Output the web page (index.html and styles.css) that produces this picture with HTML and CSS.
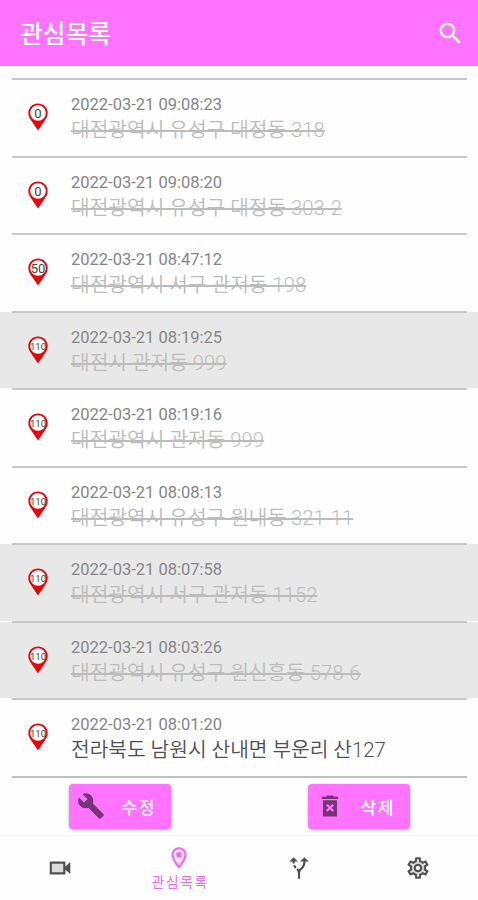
FILE: index.html
```html
<!DOCTYPE html>
<html lang="ko">
<head>
    <meta charset="UTF-8">
    <meta name="viewport" content="width=device-width, initial-scale=1.0">
    <title>관심목록</title>
    <link rel="stylesheet" href="styles.css">
</head>
<body>
    <header class="app-bar">
        <h1>관심목록</h1>
        <svg class="search" viewBox="0 0 24 24"><path d="M15.5 14h-.79l-.28-.27A6.47 6.47 0 0 0 16 9.5 6.5 6.5 0 1 0 9.5 16c1.61 0 3.09-.59 4.23-1.57l.27.28v.79l5 4.99L20.49 19l-4.99-5zm-6 0C7.01 14 5 11.99 5 9.5S7.01 5 9.5 5 14 7.01 14 9.5 11.99 14 9.5 14z"/></svg>
    </header>

    <ul class="list" id="list"></ul>

    <div class="actions">
        <div class="action">
            <button class="btn">
                <svg class="wrench" viewBox="0 0 24 24"><path d="M22.7 19l-9.1-9.1c.9-2.3.4-5-1.5-6.9-2-2-5-2.4-7.4-1.3L9 6 6 9 1.6 4.7C.4 7.1.9 10.1 2.9 12.1c1.9 1.9 4.6 2.4 6.9 1.5l9.1 9.1c.4.4 1 .4 1.4 0l2.3-2.3c.5-.4.5-1.1.1-1.4z"/></svg>
                <span>수정</span>
            </button>
        </div>
        <div class="action">
            <button class="btn">
                <svg class="trash" viewBox="0 0 24 24"><path d="M6 21h12V7H6v14zm2.6-9.4L10 10.2l2 2 2-2 1.4 1.4-2 2 2 2L14 17l-2-2-2 2-1.4-1.4 2-2-2-2zM19 4h-3.500l-1-1h-5l-1 1H5v2h14V4z"/></svg>
                <span>삭제</span>
            </button>
        </div>
    </div>

    <nav class="tabs">
        <a class="tab">
            <svg viewBox="0 0 24 24"><path class="tint" d="M4 7h12v10H4z"/><path d="M17 10.500V7c0-.55-.45-1-1-1H3.500c-.55 0-1 .45-1 1v10c0 .55.45 1 1 1H16c.55 0 1-.45 1-1v-3.500l4.500 4v-11l-4.500 4zM15 16H4.500V8H15v8z"/></svg>
        </a>
        <a class="tab active">
            <svg viewBox="0 0 24 24"><path class="tint" d="M12 3c-3.300 0-6 2.700-6 6 0 4 6 11 6 11s6-7 6-11c0-3.300-2.700-6-6-6z"/><path d="M12 2C8.130 2 5 5.130 5 9c0 5.250 7 13 7 13s7-7.750 7-13c0-3.870-3.130-7-7-7zM7 9c0-2.760 2.240-5 5-5s5 2.240 5 5c0 2.880-2.880 7.190-5 9.880C9.920 16.210 7 11.850 7 9z"/><circle cx="12" cy="9" r="2.500"/></svg>
            <span>관심목록</span>
        </a>
        <a class="tab">
            <svg viewBox="0 0 24 24"><path d="M9.780 11.160l-1.420 1.420a7.282 7.282 0 0 1-1.790-2.940l1.940-.49c.32.890.770 1.500 1.270 2.010zM11 6L7 2 3 6h3.020c.020.810.080 1.540.190 2.170l1.940-.49C8.080 7.200 8.030 6.630 8.020 6H11zm10 0l-4-4-4 4h2.990c-.1 3.680-1.280 4.750-2.540 5.880-.5.440-1.010.920-1.450 1.550-.34-.49-.73-.88-1.130-1.240L9.460 13.600c.93.850 1.540 1.540 1.540 3.400v5h2v-5c0-2.020.71-2.660 1.790-3.630 1.380-1.240 3.080-2.780 3.200-7.370H21z"/></svg>
        </a>
        <a class="tab">
            <svg viewBox="0 0 24 24"><circle class="tint" cx="12" cy="12" r="7"/><circle class="hub" cx="12" cy="12" r="3"/><path d="M19.430 12.980c.04-.32.07-.64.07-.98 0-.34-.03-.66-.07-.98l2.110-1.650c.19-.15.24-.42.12-.64l-2-3.460c-.09-.16-.26-.25-.44-.25-.06 0-.12.010-.17.030l-2.490 1c-.52-.4-1.080-.73-1.690-.98l-.38-2.650C14.460 2.180 14.250 2 14 2h-4c-.25 0-.46.18-.49.42l-.38 2.650c-.61.25-1.170.59-1.690.98l-2.490-1c-.06-.02-.12-.03-.18-.03-.17 0-.34.09-.43.25l-2 3.460c-.13.22-.07.49.12.64l2.110 1.650c-.04.32-.07.65-.07.98 0 .33.03.66.07.98l-2.110 1.650c-.19.15-.24.42-.12.64l2 3.460c.09.16.26.25.44.25.06 0 .12-.01.17-.03l2.490-1c.52.4 1.080.73 1.690.98l.38 2.650c.03.24.24.42.49.42h4c.25 0 .46-.18.49-.42l.38-2.650c.61-.25 1.170-.59 1.690-.98l2.490 1c.06.02.12.03.18.03.17 0 .34-.09.43-.25l2-3.460c.12-.22.07-.49-.12-.64l-2.110-1.650zm-1.980-1.710c.04.31.05.52.05.73 0 .21-.02.43-.05.73l-.14 1.130.89.7 1.080.84-.7 1.210-1.270-.51-1.040-.42-.9.68c-.43.32-.84.56-1.250.73l-1.060.43-.16 1.130-.2 1.350h-1.400l-.19-1.350-.16-1.130-1.060-.43c-.43-.18-.83-.41-1.230-.71l-.91-.7-1.060.43-1.270.51-.7-1.210 1.080-.84.89-.7-.14-1.130c-.03-.31-.05-.54-.05-.74s.02-.43.05-.73l.14-1.130-.89-.7-1.080-.84.7-1.210 1.270.51 1.040.42.9-.68c.43-.32.84-.56 1.250-.73l1.060-.43.16-1.130.2-1.350h1.390l.19 1.350.16 1.130 1.060.43c.43.18.83.41 1.230.71l.91.7 1.060-.43 1.270-.51.7 1.210-1.070.85-.89.7.14 1.130zM12 8c-2.210 0-4 1.790-4 4s1.790 4 4 4 4-1.790 4-4-1.790-4-4-4zm0 6c-1.100 0-2-.9-2-2s.9-2 2-2 2 .9 2 2-.9 2-2 2z"/></svg>
        </a>
    </nav>

    <script>
        const items = [
            { speed: '0', time: '2022-03-21 09:08:23', address: '대전광역시 유성구 대정동 318', done: true },
            { speed: '0', time: '2022-03-21 09:08:20', address: '대전광역시 유성구 대정동 303-2', done: true },
            { speed: '50', time: '2022-03-21 08:47:12', address: '대전광역시 서구 관저동 198', done: true },
            { speed: '110', time: '2022-03-21 08:19:25', address: '대전시 관저동 999', done: true, selected: true },
            { speed: '110', time: '2022-03-21 08:19:16', address: '대전광역시 관저동 999', done: true },
            { speed: '110', time: '2022-03-21 08:08:13', address: '대전광역시 유성구 원내동 321-11', done: true },
            { speed: '110', time: '2022-03-21 08:07:58', address: '대전광역시 서구 관저동 1152', done: true, selected: true },
            { speed: '110', time: '2022-03-21 08:03:26', address: '대전광역시 유성구 원신흥동 578-6', done: true, selected: true },
            { speed: '110', time: '2022-03-21 08:01:20', address: '전라북도 남원시 산내면 부운리 산127', done: false }
        ];

        document.getElementById('list').innerHTML = items.map(item => `
            <li class="row ${item.selected ? 'selected' : ''}">
                <svg class="pin" viewBox="0 0 20 28">
                    <path d="M10 .5C4.600.5.300 4.700.300 10c0 3 1.500 5.500 3.200 8L10 27.500 16.500 18c1.700-2.500 3.200-5 3.200-8C19.700 4.700 15.400.5 10 .5z"/>
                    <circle cx="10" cy="10" r="7.800"/>
                    <text class="speed n${item.speed.length}" x="10" y="${item.speed.length > 2 ? 13.5 : 14.5}">${item.speed}</text>
                </svg>
                <div class="info">
                    <div class="time">${item.time}</div>
                    <div class="address ${item.done ? 'done' : ''}">${item.address}</div>
                </div>
            </li>`).join('');
    </script>
</body>
</html>
```
FILE: styles.css
```css
* {
    box-sizing: border-box;
}

body {
    margin: 0;
    height: 900px;
    display: flex;
    flex-direction: column;
    overflow: hidden;
    background: #fefefe;
    font-family: Roboto, "Noto Sans CJK KR", sans-serif;
}

.app-bar {
    height: 66px;
    flex: none;
    display: flex;
    align-items: center;
    justify-content: space-between;
    padding: 0 13px 0 20px;
    background: #ff73ff;
    color: #fff;
}

.app-bar h1 {
    margin: 0;
    padding-top: 4px;
    font-size: 24.7px;
    font-weight: 500;
    line-height: 36px;
}

.search {
    width: 29px;
    height: 29px;
    fill: #fff;
}

.list {
    flex: none;
    list-style: none;
    margin: 12px 0 0;
    padding: 0;
}

.row {
    height: 77.5px;
    display: flex;
    padding: 0 12px 0 28px;
    background: linear-gradient(#c8c8c8, #c8c8c8) 12px 0 / 455px 2px no-repeat;
}

.row:last-child {
    height: 79.5px;
    background: linear-gradient(#c8c8c8, #c8c8c8) 12px 0 / 455px 2px no-repeat,
                linear-gradient(#c0c0bc, #c0c0bc) 12px 100% / 455px 2px no-repeat;
}

/* the fill starts just below the divider */
.row.selected {
    background: linear-gradient(#c8c8c8, #c8c8c8) 12px 0 / 455px 2px no-repeat,
                linear-gradient(#fefefe, #fefefe) 0 0 / 100% 1px no-repeat,
                #e8e8e8;
}

.pin {
    width: 20px;
    height: 28px;
    margin-top: 25px;
    margin-right: 23px;
    fill: #e4080a;
}

.pin circle {
    fill: #fff;
}

.speed {
    fill: #444;
    font-size: 13px;
    text-anchor: middle;
}

.speed.n2 {
    font-size: 13px;
}

.speed.n3 {
    font-size: 9.5px;
}

.info {
    padding-top: 14px;
    white-space: nowrap;
}

.time {
    font-size: 16.5px;
    line-height: 25px;
    color: #868686;
}

.address {
    font-size: 20.3px;
    font-weight: 350;
    line-height: 26px;
    color: #505050;
}

.address.done {
    color: #bcbcbc;
    text-decoration: line-through;
}

.actions {
    flex: 1;
    display: flex;
    padding-top: 6px;
}

.action {
    flex: 1;
    display: flex;
    justify-content: center;
    align-items: flex-start;
}

.btn {
    width: 102px;
    height: 45px;
    display: flex;
    align-items: center;
    padding: 0 0 0 8px;
    border: 0;
    border-radius: 4px;
    background: #ff73ff;
    box-shadow: 0 1px 3px rgba(0, 0, 0, 0.3);
    color: #fff;
    font: 500 17px Roboto, "Noto Sans CJK KR", sans-serif;
    letter-spacing: 1.5px;
}

.btn svg {
    width: 28px;
    height: 28px;
    margin-right: 17px;
    fill: #743574;
}

.tabs {
    flex: none;
    height: 65px;
    display: flex;
    border-top: 1px solid #f4f4f4;
}

.tab {
    flex: 1;
    display: flex;
    flex-direction: column;
    align-items: center;
    justify-content: center;
    fill: #505050;
}

.tab svg {
    width: 26px;
    height: 26px;
}

.tab .tint {
    fill: #dcdcdc;
}

.tab .hub {
    fill: #fefefe;
}

.tab.active {
    padding-top: 1px;
    fill: #ee6cee;
    color: #ee6cee;
    font-size: 13.7px;
}

.tab.active .tint {
    fill: #fcdcfc;
}

.tab span {
    padding-left: 2px;
    line-height: 22px;
    letter-spacing: 1.6px;
}
```
